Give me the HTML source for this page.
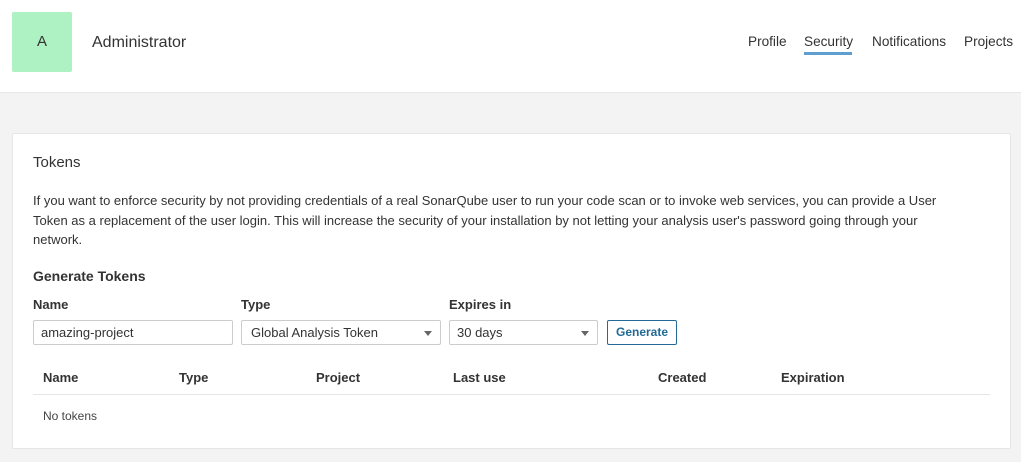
<!DOCTYPE html>
<html><head><meta charset="utf-8"><style>
*{box-sizing:border-box;margin:0;padding:0}
body{width:1021px;height:462px;overflow:hidden;background:#f3f3f3;font-family:"Liberation Sans",Helvetica,Arial,sans-serif;color:#333;position:relative}
.hdr{position:absolute;left:0;top:0;width:1021px;height:93px;background:#fff;border-bottom:1px solid #e6e6e6}
.av{position:absolute;left:12px;top:12px;width:60px;height:60px;background:#aef1c2;border-radius:2px;font-size:15px;text-align:center;line-height:60px}
.name{position:absolute;left:92px;top:34px;font-size:16px}
.nav{position:absolute;top:34px;font-size:13.6px}
.ul{position:absolute;left:804px;top:52px;width:48px;height:3px;background:#5e9fd0}
.card{position:absolute;left:12px;top:133px;width:999px;height:316px;background:#fff;border:1px solid #e6e6e6;border-radius:2px}
.a{position:absolute}
p{position:absolute;left:33px;top:191px;width:930px;font-size:13px;line-height:19.5px}
.b{font-weight:bold;font-size:13px}
.in{position:absolute;top:320px;height:25px;border:1px solid #ccc;border-radius:2px;font-size:13px;line-height:23px;padding-left:7px;background:#fff}
.car{position:absolute;right:8px;top:10px;border-left:4px solid transparent;border-right:4px solid transparent;border-top:5px solid #666}
.btn{position:absolute;left:607px;top:320px;width:70px;height:25px;border:1px solid #236a97;border-radius:2px;color:#236a97;font-weight:bold;font-size:12px;text-align:center;line-height:23px}
.th{position:absolute;top:370px;font-weight:bold;font-size:13px}
</style></head><body>
<div class="hdr"></div>
<div class="av">A</div>
<div class="name">Administrator</div>
<div class="nav" style="left:748px">Profile</div>
<div class="nav" style="left:804px">Security</div>
<div class="nav" style="left:872px">Notifications</div>
<div class="nav" style="left:964px">Projects</div>
<div class="ul"></div>
<div class="card"></div>
<div class="a" style="left:33px;top:154px;font-size:15px">Tokens</div>
<p>If you want to enforce security by not providing credentials of a real SonarQube user to run your code scan or to invoke web services, you can provide a User Token as a replacement of the user login. This will increase the security of your installation by not letting your analysis user's password going through your network.</p>
<div class="a" style="left:33px;top:268px;font-weight:bold;font-size:14px">Generate Tokens</div>
<div class="a b" style="left:33px;top:297px">Name</div>
<div class="a b" style="left:241px;top:297px">Type</div>
<div class="a b" style="left:449px;top:297px">Expires in</div>
<div class="in" style="left:33px;width:200px">amazing-project</div>
<div class="in" style="left:241px;width:200px;padding-left:9px">Global Analysis Token<span class="car"></span></div>
<div class="in" style="left:449px;width:149px">30 days<span class="car"></span></div>
<div class="btn">Generate</div>
<div class="th" style="left:43px">Name</div>
<div class="th" style="left:179px">Type</div>
<div class="th" style="left:316px">Project</div>
<div class="th" style="left:453px">Last use</div>
<div class="th" style="left:658px">Created</div>
<div class="th" style="left:781px">Expiration</div>
<div class="a" style="left:33px;top:394px;width:957px;height:1px;background:#e6e6e6"></div>
<div class="a" style="left:43px;top:409px;font-size:12px;color:#444">No tokens</div>
</body></html>
